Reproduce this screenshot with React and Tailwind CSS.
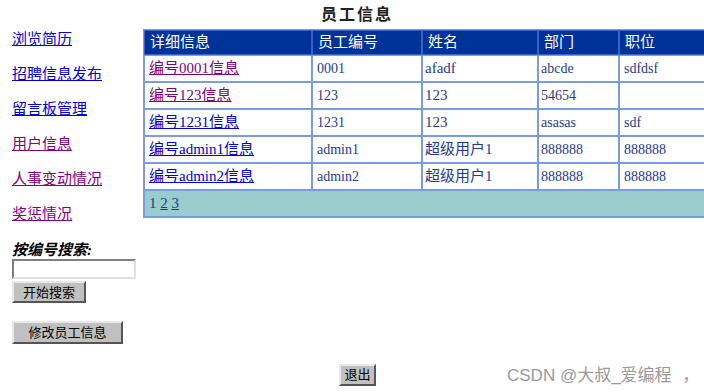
const navLinks = [
  { label: '浏览简历', visited: false },
  { label: '招聘信息发布', visited: false },
  { label: '留言板管理', visited: false },
  { label: '用户信息', visited: true },
  { label: '人事变动情况', visited: true },
  { label: '奖惩情况', visited: true },
]

const rows = [
  { link: '编号0001信息', visited: true, id: '0001', name: 'afadf', dept: 'abcde', pos: 'sdfdsf' },
  { link: '编号123信息', visited: true, id: '123', name: '123', dept: '54654', pos: '' },
  { link: '编号1231信息', visited: false, id: '1231', name: '123', dept: 'asasas', pos: 'sdf' },
  { link: '编号admin1信息', visited: false, id: 'admin1', name: '超级用户1', dept: '888888', pos: '888888' },
  { link: '编号admin2信息', visited: false, id: 'admin2', name: '超级用户1', dept: '888888', pos: '888888' },
]

const font = "font-['Liberation_Serif','Noto_Sans_CJK_SC',serif]"
const sans = "font-['Liberation_Sans','Noto_Sans_CJK_SC',sans-serif]"

function Button({ children, className = '' }) {
  return (
    <button
      className={`bg-[#c0c0c0] border-2 border-t-[#e8e8e8] border-l-[#e8e8e8] border-r-[#555] border-b-[#555] text-[13px] text-black leading-none ${sans} ${className}`}
    >
      {children}
    </button>
  )
}

export default function App() {
  return (
    <div className={`relative w-[704px] h-[392px] overflow-hidden bg-white ${font}`}>
      <div className="flex">
        {/* left nav */}
        <div className="w-[143px] shrink-0 pl-3 pt-[29px]">
          <div className="flex flex-col gap-[15px]">
            {navLinks.map(l => (
              <a
                key={l.label}
                href="#"
                className={`text-[15px] leading-[20px] underline ${l.visited ? 'text-[#800080]' : 'text-[#0000dd]'}`}
              >
                {l.label}
              </a>
            ))}
          </div>
          <div className="mt-[17px] text-[15px] leading-[18px] italic font-bold text-black">按编号搜索:</div>
          <input className="block w-[124px] h-[20px] border-2 border-t-[#808080] border-l-[#808080] border-r-[#e0e0e0] border-b-[#e0e0e0] bg-white outline-none" />
          <Button className="block w-[74px] h-[22px] mt-[2px]">开始搜索</Button>
          <Button className="block w-[111px] h-[23px] mt-[18px]">修改员工信息</Button>
        </div>

        {/* main */}
        <div className="flex-1">
          <div className="h-[29px] w-[428px] text-center text-[16px] font-bold leading-[29px] text-[#222] tracking-[2px]">
            员工信息
          </div>
          <table className="table-fixed w-[580px] border-separate border-spacing-0 border border-[#7b9be0]">
            <colgroup>
              <col className="w-[168px]" />
              <col className="w-[110px]" />
              <col className="w-[116px]" />
              <col className="w-[81px]" />
              <col />
            </colgroup>
            <thead>
              <tr className="bg-[#003399] text-white text-[15px]">
                {['详细信息', '员工编号', '姓名', '部门', '职位'].map(h => (
                  <th key={h} className="h-[25px] px-[5px] text-left font-normal border border-[#3a62c4] leading-none">
                    {h}
                  </th>
                ))}
              </tr>
            </thead>
            <tbody className="text-[#1f3b8c] text-[14px]">
              {rows.map(r => (
                <tr key={r.link}>
                  <td className="h-[27px] px-[4px] border border-[#7b9be0]">
                    <a href="#" className={`text-[15px] underline ${r.visited ? 'text-[#800080]' : 'text-[#0000dd]'}`}>
                      {r.link}
                    </a>
                  </td>
                  <td className="px-[4px] border border-[#7b9be0]">{r.id}</td>
                  <td className="px-[2px] border border-[#7b9be0] text-[15px]">{r.name}</td>
                  <td className="px-[2px] border border-[#7b9be0]">{r.dept}</td>
                  <td className="px-[4px] border border-[#7b9be0]">{r.pos}</td>
                </tr>
              ))}
              <tr className="bg-[#99cccc]">
                <td colSpan={5} className="h-[27px] px-[4px] border border-[#7b9be0] text-[15px]">
                  1 <a href="#" className="underline">2</a> <a href="#" className="underline">3</a>
                </td>
              </tr>
            </tbody>
          </table>
        </div>
      </div>

      <div className="absolute left-[339px] top-[362px]">
        <Button className="w-[37px] h-[22px]">退出</Button>
      </div>

      <div className={`absolute left-[507px] top-[363px] text-[17px] text-[#999] ${sans}`}>
        CSDN @大叔_爱编程 <span className="ml-[6px]">，</span>
      </div>
    </div>
  )
}
